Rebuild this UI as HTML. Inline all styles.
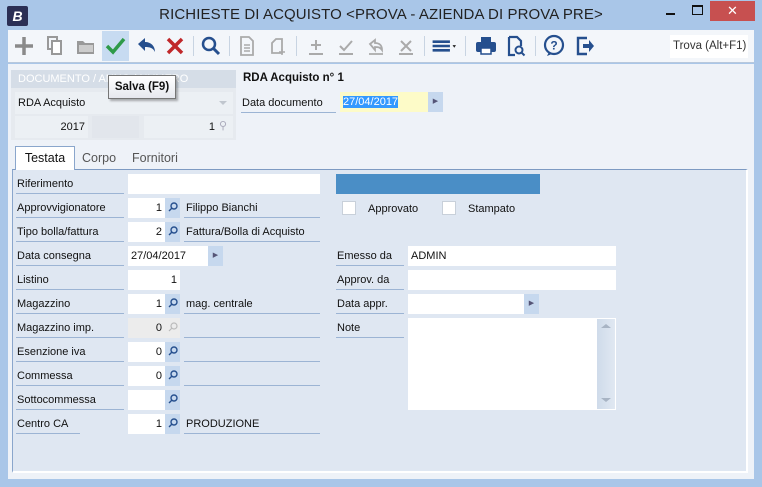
<!DOCTYPE html>
<html><head><meta charset="utf-8"><style>
*{box-sizing:border-box;margin:0;padding:0}
body{width:762px;height:487px;overflow:hidden;font-family:"Liberation Sans",sans-serif;font-size:11px;color:#111;background:#a9c6e8;position:relative}
.a{position:absolute}
.lbl{position:absolute;border-bottom:1px solid #9cb4d4;height:20px;line-height:21px;padding-left:1px;font-size:11px}
.in{position:absolute;background:#fff;height:20px;line-height:20px;padding:0 3px;font-size:11px}
.btn{position:absolute;background:#c6d8ee;height:20px;width:15px}
.desc{position:absolute;border-bottom:1px solid #9cb4d4;height:20px;line-height:21px;padding-left:2px}
.ic{position:absolute;top:33px;width:26px;height:26px}
.sep{position:absolute;top:36px;width:1px;height:20px;background:#c8d4e2}
</style></head><body>
<div class="a" style="left:7px;top:6px;width:21px;height:20px;background:#2b2f55;border-radius:2px;color:#fff;font-weight:bold;font-style:italic;font-size:14px;text-align:center;line-height:20px">B</div>
<div class="a" style="left:0;top:6px;width:762px;text-align:center;font-size:15px;color:#222;letter-spacing:0.1px">RICHIESTE DI ACQUISTO &lt;PROVA - AZIENDA DI PROVA PRE&gt;</div>
<div class="a" style="left:666px;top:13px;width:9px;height:2px;background:#111"></div>
<div class="a" style="left:692px;top:5px;width:11px;height:10px;border:1px solid #111;border-top-width:2px"></div>
<div class="a" style="left:710px;top:1px;width:45px;height:20px;background:#c75050;color:#fff;text-align:center;line-height:20px;font-size:13px">✕</div>
<div class="a" style="left:8px;top:30px;width:746px;height:33px;background:#f3f6fa;border-bottom:1px solid #b8c8dc"></div>
<div class="a" style="left:102px;top:31px;width:27px;height:30px;background:#c7dbf1"></div>
<svg class="ic" style="left:11px" viewBox="0 0 26 26"><path d="M13 4v18M4 13h18" stroke="#8a8a8a" stroke-width="3.5"/></svg>
<svg class="ic" style="left:42px" viewBox="0 0 26 26"><rect x="6" y="4" width="9" height="12" fill="none" stroke="#999" stroke-width="2"/><rect x="10" y="8" width="9" height="13" fill="#fff" stroke="#999" stroke-width="2"/></svg>
<svg class="ic" style="left:73px" viewBox="0 0 26 26"><path d="M4 8h6l2 2h9v11H4z" fill="#999"/><path d="M6 12h14v7H6z" fill="#ccc"/></svg>
<svg class="ic" style="left:102px" viewBox="0 0 26 26"><path d="M5 13l6 6 11-13" fill="none" stroke="#2e9a48" stroke-width="3.5"/></svg>
<svg class="ic" style="left:133px" viewBox="0 0 26 26"><path d="M5 11l7-6v4c6 0 10 4 10 10-2-4-5-5-10-5v4z" fill="#254f8e"/></svg>
<svg class="ic" style="left:162px" viewBox="0 0 26 26"><path d="M6 6l14 14M20 6L6 20" stroke="#c0282a" stroke-width="3.5"/></svg>
<div class="sep" style="left:193px"></div>
<svg class="ic" style="left:198px" viewBox="0 0 26 26"><circle cx="11" cy="11" r="6" fill="none" stroke="#254f8e" stroke-width="2.5"/><path d="M15 15l6 6" stroke="#254f8e" stroke-width="3"/></svg>
<div class="sep" style="left:229px"></div>
<svg class="ic" style="left:234px" viewBox="0 0 26 26"><path d="M7 4h8l4 4v14H7z" fill="none" stroke="#aaa" stroke-width="1.8"/><path d="M10 12h6M10 15h6M10 18h6" stroke="#aaa" stroke-width="1.5"/></svg>
<svg class="ic" style="left:265px" viewBox="0 0 26 26"><path d="M7 20V10l4-4h6v14z" fill="none" stroke="#aaa" stroke-width="1.8"/><path d="M17 16v6M14 19h6" stroke="#aaa" stroke-width="1.5"/></svg>
<div class="sep" style="left:296px"></div>
<svg class="ic" style="left:303px" viewBox="0 0 26 26"><path d="M13 7v10M8 12h10M6 21h14" stroke="#aaa" stroke-width="2"/></svg>
<svg class="ic" style="left:333px" viewBox="0 0 26 26"><path d="M7 13l4 4 8-9M6 21h14" fill="none" stroke="#aaa" stroke-width="2"/></svg>
<svg class="ic" style="left:363px" viewBox="0 0 26 26"><path d="M7 11l5-4v3c5 0 7 3 7 7-2-3-4-3-7-3v3zM6 21h14" fill="none" stroke="#aaa" stroke-width="1.8"/></svg>
<svg class="ic" style="left:393px" viewBox="0 0 26 26"><path d="M8 8l10 10M18 8L8 18M6 21h14" stroke="#aaa" stroke-width="2"/></svg>
<div class="sep" style="left:424px"></div>
<svg class="ic" style="left:430px" viewBox="0 0 30 26"><path d="M3 8h20M3 13h20M3 18h20" stroke="#254f8e" stroke-width="3"/><path d="M26 12h4l-2 3z" fill="#222"/></svg>
<div class="sep" style="left:465px"></div>
<svg class="ic" style="left:473px" viewBox="0 0 26 26"><rect x="8" y="4" width="10" height="5" fill="#254f8e"/><rect x="3" y="9" width="20" height="10" rx="2" fill="#254f8e"/><rect x="8" y="15" width="10" height="6" fill="#fff" stroke="#254f8e" stroke-width="1.5"/></svg>
<svg class="ic" style="left:503px" viewBox="0 0 26 26"><path d="M6 4h8l4 4v5M12 22H6V4" fill="none" stroke="#254f8e" stroke-width="2.2"/><circle cx="16" cy="17" r="3.5" fill="none" stroke="#254f8e" stroke-width="2"/><path d="M18.5 19.5l3 3" stroke="#254f8e" stroke-width="2"/></svg>
<div class="sep" style="left:535px"></div>
<svg class="ic" style="left:541px" viewBox="0 0 26 26"><circle cx="13" cy="12" r="9" fill="none" stroke="#254f8e" stroke-width="2.2"/><path d="M8 19l-2 4 5-2" fill="#254f8e"/><text x="13" y="16.5" font-size="12" font-weight="bold" text-anchor="middle" fill="#254f8e" font-family="Liberation Sans">?</text></svg>
<svg class="ic" style="left:572px" viewBox="0 0 26 26"><path d="M15 5H6v16h9" fill="none" stroke="#254f8e" stroke-width="2.4"/><path d="M11 11h6V7l5 6-5 6v-4h-6z" fill="#254f8e"/></svg>
<div class="a" style="left:670px;top:35px;width:78px;height:23px;background:#fff;line-height:23px;padding-left:3px;font-size:11.5px;color:#333">Trova (Alt+F1)</div>
<div class="a" style="left:8px;top:64px;width:746px;height:415px;background:#eef2f8"></div>
<div class="a" style="left:11px;top:70px;width:225px;height:18px;background:#d5dde7;color:#fff;line-height:18px;padding-left:7px;font-size:11px">DOCUMENTO / ANNO / NUMERO</div>
<div class="a" style="left:11px;top:88px;width:225px;height:52px;background:#e6eaef"></div>
<div class="a" style="left:15px;top:92px;width:218px;height:22px;background:#ecf0f4;line-height:22px;padding-left:3px">RDA Acquisto</div>
<div class="a" style="left:219px;top:101px;width:0;height:0;border-left:4px solid transparent;border-right:4px solid transparent;border-top:4px solid #c0c6ce"></div>
<div class="a" style="left:15px;top:116px;width:73px;height:22px;background:#ecf0f4;line-height:22px;text-align:right;padding-right:3px">2017</div>
<div class="a" style="left:92px;top:116px;width:47px;height:22px;background:#e2e6ec"></div>
<div class="a" style="left:144px;top:116px;width:89px;height:22px;background:#ecf0f4;line-height:22px;text-align:right;padding-right:18px">1</div>
<div class="a" style="left:219px;top:119px;color:#aab;font-size:11px">⚲</div>
<div class="a" style="left:108px;top:75px;width:68px;height:24px;background:linear-gradient(#fff,#e6e8ee);border:1px solid #767676;box-shadow:2px 2px 2px rgba(0,0,0,.3);font-weight:bold;font-size:11.5px;line-height:22px;text-align:center">Salva (F9)</div>
<div class="a" style="left:243px;top:72px;font-weight:bold;font-size:11.5px">RDA Acquisto n° 1</div>
<div class="lbl" style="left:241px;top:93px;width:95px">Data documento</div>
<div class="in" style="left:340px;top:92px;width:88px;background:#fdfbc8;padding-left:3px"><span style="background:#3399ff;color:#fff">27/04/2017</span></div>
<div class="btn" style="left:428px;top:92px;color:#557;font-size:7px;text-align:center;line-height:20px">▶</div>
<div class="a" style="left:12px;top:169px;width:736px;height:304px;background:#dfe7f2;border:1px solid #8aa6cc;border-right:2px solid #fff;border-bottom:2px solid #fff;border-top:1px solid #7d9ac2"></div>
<div class="a" style="left:15px;top:146px;width:60px;height:24px;background:#fff;border:1px solid #8aa6cc;border-bottom:none;text-align:center;line-height:23px;font-size:12.5px">Testata</div>
<div class="a" style="left:82px;top:151px;font-size:12.5px;color:#555">Corpo</div>
<div class="a" style="left:132px;top:151px;font-size:12.5px;color:#555">Fornitori</div>
<div class="lbl" style="left:16px;top:174px;width:108px">Riferimento</div>
<div class="in" style="left:128px;top:174px;width:192px"></div>
<div class="lbl" style="left:16px;top:198px;width:108px">Approvvigionatore</div>
<div class="in" style="left:128px;top:198px;width:37px;text-align:right">1</div><div class="btn" style="left:165px;top:198px"></div>
<div class="desc" style="left:184px;top:198px;width:136px">Filippo Bianchi</div>
<div class="lbl" style="left:16px;top:222px;width:108px">Tipo bolla/fattura</div>
<div class="in" style="left:128px;top:222px;width:37px;text-align:right">2</div><div class="btn" style="left:165px;top:222px"></div>
<div class="desc" style="left:184px;top:222px;width:136px">Fattura/Bolla di Acquisto</div>
<div class="lbl" style="left:16px;top:246px;width:108px">Data consegna</div>
<div class="in" style="left:128px;top:246px;width:80px">27/04/2017</div>
<div class="btn" style="left:208px;top:246px;color:#557;font-size:7px;text-align:center;line-height:20px">▶</div>
<div class="lbl" style="left:16px;top:270px;width:108px">Listino</div>
<div class="in" style="left:128px;top:270px;width:52px;text-align:right">1</div>
<div class="lbl" style="left:16px;top:294px;width:108px">Magazzino</div>
<div class="in" style="left:128px;top:294px;width:37px;text-align:right">1</div><div class="btn" style="left:165px;top:294px"></div>
<div class="desc" style="left:184px;top:294px;width:136px">mag. centrale</div>
<div class="lbl" style="left:16px;top:318px;width:108px">Magazzino imp.</div>
<div class="in" style="left:128px;top:318px;width:52px;background:#ececec;text-align:right;padding-right:18px">0</div>
<div class="desc" style="left:184px;top:318px;width:136px"></div>
<div class="lbl" style="left:16px;top:342px;width:108px">Esenzione iva</div>
<div class="in" style="left:128px;top:342px;width:37px;text-align:right">0</div><div class="btn" style="left:165px;top:342px"></div>
<div class="desc" style="left:184px;top:342px;width:136px"></div>
<div class="lbl" style="left:16px;top:366px;width:108px">Commessa</div>
<div class="in" style="left:128px;top:366px;width:37px;text-align:right">0</div><div class="btn" style="left:165px;top:366px"></div>
<div class="desc" style="left:184px;top:366px;width:136px"></div>
<div class="lbl" style="left:16px;top:390px;width:108px">Sottocommessa</div>
<div class="in" style="left:128px;top:390px;width:37px"></div><div class="btn" style="left:165px;top:390px"></div>
<div class="lbl" style="left:16px;top:414px;width:64px">Centro CA</div>
<div class="in" style="left:128px;top:414px;width:37px;text-align:right">1</div><div class="btn" style="left:165px;top:414px"></div>
<div class="desc" style="left:184px;top:414px;width:136px">PRODUZIONE</div>
<svg class="a" style="left:0;top:0" width="762" height="487">
<g fill="none" stroke="#254f8e" stroke-width="1.4">
<g id="s"><circle cx="174" cy="206" r="3"/><path d="M172 208l-3 3"/></g>
<use href="#s" y="24"/><use href="#s" y="96"/><use href="#s" y="144"/><use href="#s" y="168"/><use href="#s" y="192"/><use href="#s" y="216"/>
</g>
<g fill="none" stroke="#bbb" stroke-width="1.2"><circle cx="174" cy="326" r="3"/><path d="M172 328l-3 3"/></g>
</svg>
<div class="a" style="left:336px;top:174px;width:204px;height:20px;background:#4a8ec6"></div>
<div class="a" style="left:342px;top:201px;width:14px;height:14px;background:#fff;border:1px solid #c8d0da"></div>
<div class="a" style="left:368px;top:203px">Approvato</div>
<div class="a" style="left:442px;top:201px;width:14px;height:14px;background:#fff;border:1px solid #c8d0da"></div>
<div class="a" style="left:468px;top:203px">Stampato</div>
<div class="lbl" style="left:336px;top:246px;width:68px">Emesso da</div>
<div class="in" style="left:408px;top:246px;width:208px">ADMIN</div>
<div class="lbl" style="left:336px;top:270px;width:68px">Approv. da</div>
<div class="in" style="left:408px;top:270px;width:208px"></div>
<div class="lbl" style="left:336px;top:294px;width:68px">Data appr.</div>
<div class="in" style="left:408px;top:294px;width:116px"></div>
<div class="btn" style="left:524px;top:294px;color:#557;font-size:7px;text-align:center;line-height:20px">▶</div>
<div class="lbl" style="left:336px;top:318px;width:68px">Note</div>
<div class="in" style="left:408px;top:318px;width:208px;height:92px"></div>
<div class="a" style="left:597px;top:319px;width:18px;height:90px;background:linear-gradient(90deg,#cfdbea,#e0e8f2)"></div>
<div class="a" style="left:601px;top:324px;border-left:5px solid transparent;border-right:5px solid transparent;border-bottom:4px solid #a8b4c4"></div>
<div class="a" style="left:601px;top:398px;border-left:5px solid transparent;border-right:5px solid transparent;border-top:4px solid #a8b4c4"></div>
</body></html>
